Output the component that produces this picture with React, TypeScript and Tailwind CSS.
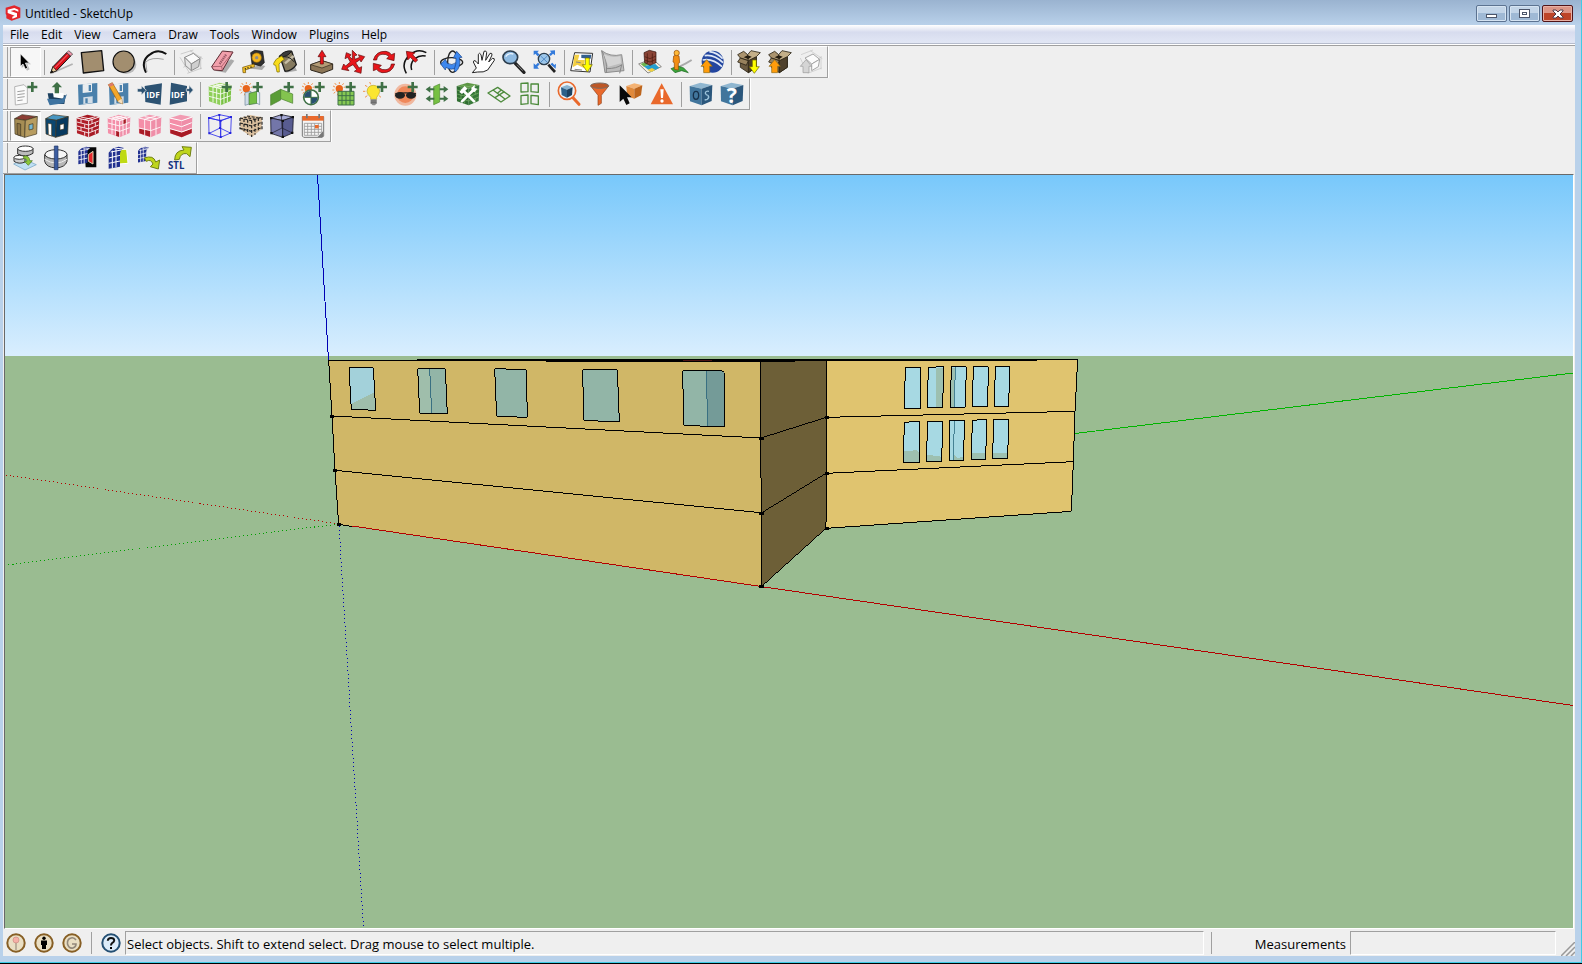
import type { ReactNode } from "react";

type Tool = { label: string; art: ReactNode; active?: boolean };

const Icon = ({ children }: { children: ReactNode }) => (
  <svg viewBox="0 0 72 72" className="size-6 shrink-0 overflow-visible" aria-hidden="true" strokeLinejoin="round">
    {children}
  </svg>
);

const Plus = ({ x = 40, y = 0 }: { x?: number; y?: number }) => (
  <path d={`M${x + 12} ${y}h8v11h11v8h-11v11h-8v-11h-11v-8h11z`} fill="#3f7046" />
);

const Sun = ({ x = 22, y = 20 }: { x?: number; y?: number }) => (
  <g transform={`translate(${x} ${y})`}>
    <path d="M0-20v6M-19-8l6 3M-14-17l5 6M-21 4h6M-17 14l5-4M13-16l-4 5M18-5l-5 1M-6 20l2-6" stroke="#f0934e" strokeWidth="3" />
    <circle r="11" fill="#e8641b" />
  </g>
);

const UpArrow = ({ x, y, fill }: { x: number; y: number; fill: string }) => (
  <path d={`M${x} ${y}l17 20h-8v19h-18v-19h-8z`} fill={fill} stroke="#8a6a1a" strokeWidth="2" />
);

const cubeTop = "3,12 34,2 69,9 38,20";
const cubeLeft = "2,12 38,20 38,70 3,58";
const cubeRight = "38,20 70,9 68,57 38,70";

const Cube = ({ top, left, right, line = "none", outline, children }: { top: string; left: string; right: string; line?: string; outline?: boolean; children?: ReactNode }) => (
  <g strokeWidth="2.5">
    <g stroke={outline ? line : "none"}>
      <polygon points={cubeTop} fill={top} />
      <polygon points={cubeLeft} fill={left} />
      <polygon points={cubeRight} fill={right} />
    </g>
    <g stroke={line}>{children}</g>
  </g>
);

const edgePath = "M2 12L38 20 70 9M38 20V70";
const gridPath = "M3 27L38 36 68 25M3 43L38 52 68 41M15 15V61M26 17V65M48 16V65M58 12V61M14 9L49 16M24 6L59 12M14 15L46 6M26 17L58 8";
const brickPath = "M3 24L38 33 68 21M3 36L38 45 68 33M3 47L38 57 68 45M15 15V27M26 31V42M15 39V50M26 54V65M48 17V29M58 26V37M48 41V53M58 49V60M14 9L49 16M26 17L58 8";

const Globe = () => (
  <g>
    <circle cx="38" cy="35" r="33" fill="#23469f" />
    <path d="M14 17Q42 12 69 38M8 30Q38 24 66 50M28 5Q52 8 68 26" fill="none" stroke="#dfe8f7" strokeWidth="5" />
  </g>
);

const OpenBox = () => (
  <g stroke="#2b2416" strokeWidth="2.5">
    <path d="M10 24L34 32 58 20V52L34 68 10 52z" fill="#6b5a40" />
    <path d="M34 32V68L58 52V20z" fill="#4f412c" />
    <path d="M10 24L2 14 20 4 32 14 34 32z" fill="#ab946f" />
    <path d="M32 14L42 2 70 8 58 20 34 32z" fill="#c4af88" />
    <path d="M10 24L34 32 28 46 2 36z" fill="#97815d" />
    <path d="M20 22L32 16 44 20 34 27z" fill="#241c10" stroke="none" />
  </g>
);

const Magnifier = ({ lens = "#8fbbe2" }: { lens?: string }) => (
  <g>
    <path d="M40 40L66 67" stroke="#222" strokeWidth="10" strokeLinecap="round" />
    <path d="M45 44L62 62" stroke="#888" strokeWidth="3" />
    <ellipse cx="25" cy="22" rx="22" ry="19" fill={lens} stroke="#2c3d4d" strokeWidth="5" />
    <path d="M11 20Q18 8 34 12" stroke="#e7f2fc" strokeWidth="4" fill="none" />
  </g>
);

const Floppy = () => (
  <g>
    <path d="M6 8L64 3V62L8 69z" fill="#4a80ab" />
    <path d="M20 7L48 4V30L20 33z" fill="#e9edf0" />
    <path d="M22 46L50 43V63L22 66z" fill="#d3dde6" />
    <path d="M38 9h7v18h-7z" fill="#4a80ab" />
    <path d="M28 49h7v14h-7z" fill="#4a80ab" />
  </g>
);

const Idf = ({ out = false }: { out?: boolean }) => (
  <g>
    <path d={out ? "M6 2L54 12V58L2 68z" : "M20 12L72 4 68 68 22 60z"} fill="#2c5272" />
    <path d={out ? "M52 20h8v-10l13 14-13 14v-10h-8z" : "M-2 20h12v-9l15 14-15 14v-9H-2z"} fill="#2c5272" stroke="#efefef" strokeWidth="2" />
    <text x={out ? 6 : 25} y="48" fontSize="25" fontWeight="700" fontFamily="Open Sans, sans-serif" fill="#fff">IDF</text>
  </g>
);

const House = ({ wall, side, roof, glass, door }: { wall: string; side: string; roof: string; glass: string; door: string }) => (
  <g stroke="#3d3420" strokeWidth="2">
    <polygon points="2,14 24,2 70,8 34,19" fill={roof} />
    <polygon points="2,14 34,19 32,70 3,60" fill={wall} />
    <polygon points="34,19 70,8 68,60 32,70" fill={side} />
    <path d="M9 28L20 30V66L10 62z" fill={door} />
    <path d="M45 32L57 29V45L45 48z" fill={glass} />
  </g>
);

const Panels = ({ x = 4, s = 1 }: { x?: number; s?: number }) => (
  <g transform={`translate(${x} 2) scale(${s})`}>
    <path d="M0 18Q10 2 30 0L46 4Q34 8 34 26V60L0 66z" fill="#21308f" />
    <path d="M0 34L34 26M0 50L34 43M11 12V64M22 6V62M6 16L38 10M16 4L42 7" stroke="#fff" strokeWidth="3" fill="none" />
  </g>
);

const drawing: Tool[][] = [
  [{ label: "Select", active: true, art: <><path d="M26 17V54L34 47 42 62 50 58 43 43H54z" fill="#bbb" /><path d="M22 11V49L30 42 37 57 44 54 37 39H49z" fill="#000" stroke="#fff" strokeWidth="2" /></> }],
  [
    { label: "Pencil", art: <><path d="M6 69L68 42" stroke="#b2b2b2" strokeWidth="5" /><path d="M2 69L9 50 50 8 62 18 20 62z" fill="#d90f18" stroke="#111" strokeWidth="3" /><path d="M14 54L54 13" stroke="#ff7880" strokeWidth="3" /><path d="M2 69L9 50 20 62z" fill="#e7c99c" stroke="#111" strokeWidth="2" /><path d="M2 69L5 61 10 65z" fill="#000" /><path d="M50 8L56 2 68 12 62 18z" fill="#f095a9" stroke="#333" strokeWidth="2" /></> },
    { label: "Rectangle", art: <path d="M1 8L62 2 68 62 7 69z" fill="#a28e6f" stroke="#111" strokeWidth="4" /> },
    { label: "Circle", art: <><ellipse cx="42" cy="44" rx="31" ry="28" fill="#bbb" /><circle cx="35" cy="35" r="32" fill="#a28e6f" stroke="#111" strokeWidth="3.5" /></> },
    { label: "Arc", art: <><path d="M9 68Q-8 34 20 14Q44-6 70 12" fill="none" stroke="#111" strokeWidth="6" /><path d="M8 36Q26 20 62 28M8 36L12 66" fill="none" stroke="#777" strokeWidth="2" /></> },
  ],
  [
    { label: "Make Component", art: <g fill="#fafafa" stroke="#8d8d8d" strokeWidth="3"><path d="M2 12L40 0M0 22L28 68M30 2L68 26M10 52L64 20M22 70L66 54M62 20V58" stroke="#b9b9b9" strokeWidth="2" fill="none" /><path d="M14 22L40 10 60 26 34 42z" /><path d="M14 22L34 42V62L16 46z" fill="#e6e6e6" /><path d="M34 42L60 26 56 50 34 62z" fill="#cfcfcf" /></g> },
    { label: "Eraser", art: <><path d="M12 62L44 68 70 32 60 28z" fill="#aaa" /><path d="M2 50L34 3 66 6 34 62 8 60z" fill="#f2a0ab" stroke="#5c2c33" strokeWidth="3" /><path d="M2 50L32 49 66 6M32 49L34 62" fill="none" stroke="#8d4955" strokeWidth="2" /><path d="M26 42L45 14" stroke="#9a5966" strokeWidth="7" strokeDasharray="4 2" /></> },
    { label: "Tape Measure", art: <><path d="M24 56L60 60 70 48 54 44z" fill="#aaa" /><path d="M26 8L38 1 62 4 67 38 56 48 30 42z" fill="#303030" stroke="#111" strokeWidth="2" /><circle cx="44" cy="23" r="14" fill="#f4b51e" stroke="#a77609" strokeWidth="2" /><circle cx="44" cy="23" r="5" fill="#8d8d8d" /><path d="M2 52L36 42 38 50 10 60 11 68H3z" fill="#f6c42b" stroke="#6b4b00" strokeWidth="2" /><path d="M10 54v5M18 51v5M27 49v5" stroke="#222" strokeWidth="3" /></> },
    { label: "Paint Bucket", art: <><path d="M36 68L72 62 64 46z" fill="#aaa" /><path d="M20 18L56 4 70 44 Q56 64 36 64z" fill="#857a60" stroke="#1c1c1c" strokeWidth="4" /><path d="M36 40L62 18" stroke="#c6bda6" strokeWidth="7" /><path d="M18 20Q34 0 56 3 42 24 18 20" fill="#3b3b3b" stroke="#1c1c1c" strokeWidth="3" /><path d="M22 24Q44 12 64 36" fill="none" stroke="#222" strokeWidth="3" /><path d="M26 18Q6 26 2 40Q0 46 8 46L12 66 19 66 18 42Q24 34 34 28z" fill="#f8dc1b" stroke="#7a6a00" strokeWidth="2" /></> },
  ],
  [
    { label: "Push/Pull", art: <><path d="M2 44L36 32 68 42V58L36 70 2 60z" fill="#8c7657" stroke="#2c241a" strokeWidth="3" /><path d="M2 44L36 32 68 42 36 54z" fill="#b49c76" stroke="#2c241a" strokeWidth="2" /><path d="M36 1L48 20H40V42H31V20H24z" fill="#e8161b" stroke="#5c0808" strokeWidth="2" /></> },
    { label: "Move", art: <path d="M34 1L48 15 40 18 42 28 56 22 52 14 71 20 60 36 57 29 44 38 54 54 62 50 60 70 40 64 47 59 36 44 18 54 24 62 2 58 8 42 14 48 28 36 20 22 12 26 16 8 30 14 26 20 34 28z" fill="#e8161b" stroke="#5c0808" strokeWidth="2" /> },
    { label: "Rotate", art: <g fill="#e8161b" stroke="#5c0808" strokeWidth="2"><path d="M4 30Q12 2 42 4 54 6 58 14L68 10 66 32 44 26 51 19Q42 11 30 13 16 15 14 30z" /><path d="M68 42Q60 70 30 68 18 66 14 58L4 62 4 40 28 46 21 53Q30 61 42 59 56 57 58 42z" /></g> },
    { label: "Offset", art: <><path d="M10 70Q-8 38 22 14Q44-6 70 8M26 60Q20 40 36 26Q50 14 68 18" fill="none" stroke="#111" strokeWidth="4.5" /><path d="M10 4L36 8 29 14 44 30 37 37 22 22 14 30z" fill="#e8161b" stroke="#5c0808" strokeWidth="2" /></> },
  ],
  [
    { label: "Orbit", art: <><ellipse cx="35" cy="37" rx="33" ry="14" fill="none" stroke="#222" strokeWidth="4" /><ellipse cx="38" cy="35" rx="15" ry="32" fill="none" stroke="#222" strokeWidth="4" /><path d="M2 42L16 28 22 40Q36 48 48 38L54 50Q34 64 18 52L16 60z" fill="#3d87ee" stroke="#153f83" strokeWidth="2" /><path d="M50 4L66 22 58 23Q64 52 46 66L42 60Q50 42 48 24L40 24z" fill="#3d87ee" stroke="#153f83" strokeWidth="2" /></> },
    { label: "Pan", art: <path d="M4 68L16 54 7 36Q8 28 15 34L22 42 22 13Q25 6 30 14L33 31 39 4Q45 0 47 8L44 31 57 10Q64 8 63 15L53 36 64 25Q72 24 70 31L50 60Q38 68 20 66z" fill="#fff" stroke="#222" strokeWidth="3" /> },
    { label: "Zoom", art: <Magnifier /> },
    { label: "Zoom Extents", art: <><path d="M46 44L66 66" stroke="#222" strokeWidth="8" /><circle cx="33" cy="27" r="17" fill="#9dc7ea" stroke="#2c3d4d" strokeWidth="4" /><path d="M23 18L43 37M43 18L23 37" stroke="#3270b5" strokeWidth="2" /><path d="M2 2h16l-5 5 7 7-6 5-7-8-5 5zM66 1v15l-6-5-7 7-5-5 7-6-5-5zM2 56V40l6 5 7-7 5 5-7 7 5 6zM52 43l6-5 6 7 5-4-1 15z" fill="#347bdb" /></> },
  ],
  [
    { label: "Add Location", art: <><path d="M2 62L14 8 68 10 60 66z" fill="#fff" stroke="#333" strokeWidth="3" /><path d="M8 52L14 14 28 14 24 30 44 30 42 54 22 44z" fill="#f3cf42" /><path d="M34 14L64 14 62 26 34 24z" fill="#34608e" /><path d="M18 36L32 38M14 58L36 60" stroke="#888" strokeWidth="3" /><path d="M46 24H58V44H67L52 66 37 44H46z" fill="#ff0" stroke="#6d6500" strokeWidth="2" /></> },
    { label: "Toggle Terrain", art: <><path d="M2 2Q28 22 62 14L69 62 12 68z" fill="#bcbcbc" stroke="#8e8e8e" strokeWidth="3" /><path d="M2 2Q20 30 16 68M16 56Q48 56 62 44L56 70" fill="none" stroke="#888" strokeWidth="3" /><path d="M8 12Q30 26 58 18L60 40 22 50z" fill="#d4d4d4" /></> },
  ],
  [
    { label: "Photo Textures", art: <><path d="M2 42L42 26 70 50 30 69z" fill="#f5eee0" stroke="#555" strokeWidth="2" /><path d="M16 48L40 66 64 53 52 42z" fill="#259ed0" /><path d="M8 42L18 50 32 43 22 36z" fill="#6bb34f" /><path d="M28 60L40 66 52 60 42 54z" fill="#f3cf42" /><path d="M18 8L34 1 54 6V38L36 46 20 38z" fill="#8a4436" stroke="#2e120d" strokeWidth="2" /><path d="M28 10V40M43 10V40M20 20L36 26 54 18M20 30L36 36 54 28" stroke="#48190f" strokeWidth="2" fill="none" /></> },
    { label: "Street View", art: <><path d="M24 54Q48 42 68 30M48 42L68 30" stroke="#aaa" strokeWidth="6" fill="none" /><path d="M6 56L26 48 44 54 58 68 38 62 18 68z" fill="#3ba53d" stroke="#176219" strokeWidth="2" /><path d="M14 18Q22 12 30 18L32 38 28 40V60L16 58V38L12 36z" fill="#f28d12" stroke="#8c4708" strokeWidth="2" /><circle cx="23" cy="9" r="8" fill="#ffb938" stroke="#8c4708" strokeWidth="2" /></> },
    { label: "Preview in Google Earth", art: <><Globe /><UpArrow x={20} y={29} fill="#ff9c0b" /></> },
  ],
  [
    { label: "Get Models", art: <><OpenBox /><path d="M46 30H58V50H67L52 70 37 50H46z" fill="#ff0" stroke="#6d6500" strokeWidth="2" /></> },
    { label: "Share Model", art: <><OpenBox /><UpArrow x={20} y={29} fill="#ff9c0b" /></> },
    { label: "Share Component", art: <><g fill="#fbfbfb" stroke="#a5a5a5" strokeWidth="3"><path d="M6 14L42 0M4 24L24 68M34 2L70 26M14 52L68 20M26 70L68 54M66 20V58" stroke="#c4c4c4" strokeWidth="2" fill="none" /><path d="M18 24L42 12 62 28 38 42z" /><path d="M38 42L62 28 58 50 38 62z" /></g><path d="M21 29l17 20h-8v19h-18v-19h-8z" fill="#d5d5d5" stroke="#999" strokeWidth="2" /></> },
  ],
];

const openStudio: Tool[][] = [
  [
    { label: "New OpenStudio Model", art: <><path d="M2 14L30 8 40 18V64L4 69z" fill="#fafafa" stroke="#b5b5b5" strokeWidth="3" /><path d="M10 29L32 26M10 38L32 35M10 47L32 44M10 56L26 54" stroke="#8d8d8d" strokeWidth="2.5" /><Plus x={39} /></> },
    { label: "Open OpenStudio Model", art: <><path d="M8 34H24L30 40H62L58 66H14z" fill="#1b3f5e" /><path d="M24 30L56 34V50L26 46z" fill="#fff" /><path d="M6 50L50 52 66 36 56 64 14 70z" fill="#3e73a0" /><path d="M36 0L51 16H42V34H29V16H20z" fill="#3f7046" /></> },
    { label: "Save OpenStudio Model", art: <Floppy /> },
    { label: "Save OpenStudio Model As", art: <><Floppy /><path d="M4 8L16 2 44 50 46 66 32 58z" fill="#f2a72a" stroke="#996116" strokeWidth="2" /><path d="M32 58L44 50 46 66z" fill="#f6dfbd" /><path d="M4 8L16 2 20 9 8 15z" fill="#e07a68" /></> },
    { label: "Import IDF", art: <Idf /> },
    { label: "Export IDF", art: <Idf out /> },
  ],
  [
    { label: "New Space", art: <><Cube top="#a6d96f" left="#8fcf5a" right="#79c143" line="#fff"><path d={gridPath} fill="none" /><path d={edgePath} fill="none" /></Cube><Plus /></> },
    { label: "New Shading Surface Group", art: <><Sun /><path d="M18 32L36 28V64L18 70z" fill="#cfdce8" stroke="#6d8799" strokeWidth="2" /><path d="M30 34L54 28V64L30 68z" fill="#75bf45" stroke="#3f7046" strokeWidth="2" /><path d="M54 28L62 32V68L54 64" fill="#e0e8ef" stroke="#6d8799" strokeWidth="2" /><Plus /></> },
    { label: "New Interior Partition", art: <><path d="M2 38L32 22V54L2 70z" fill="#5a9d37" stroke="#477d2c" strokeWidth="2" /><path d="M32 22L68 36V64L32 50z" fill="#83c44f" stroke="#477d2c" strokeWidth="2" /><Plus /></> },
    { label: "New Daylighting Control", art: <><Sun /><circle cx="30" cy="46" r="22" fill="#fff" stroke="#3f7046" strokeWidth="5" /><path d="M30 26V46H10A20 20 0 0 1 30 26M30 66V46H50A20 20 0 0 1 30 66" fill="#274f70" /><path d="M30 26V66M10 46H50" stroke="#3f7046" strokeWidth="3" /><Plus /></> },
    { label: "New Illuminance Map", art: <><Sun /><path d="M18 28H66V69H18z" fill="#86c953" stroke="#3f7046" strokeWidth="3" /><path d="M30 28V69M42 28V69M54 28V69M18 41H66M18 55H66" stroke="#3f7046" strokeWidth="3" /><Plus /></> },
    { label: "New Luminaire", art: <><path d="M6 10l7 4M0 28h7M6 46l7-5M54 46l-6-5M20 0l3 7" stroke="#f0934e" strokeWidth="3" /><path d="M12 28Q14 10 31 10 49 11 50 28 49 38 41 46V52H23V46Q13 38 12 28" fill="#fbe631" stroke="#bda61f" strokeWidth="2" /><path d="M23 52H41V64L36 70H29L23 64z" fill="#8c8c8c" /><path d="M23 57H41M23 62H41" stroke="#555" strokeWidth="2" /><Plus x={41} /></> },
    { label: "New Glare Sensor", art: <><circle cx="34" cy="38" r="33" fill="#f18b5c" opacity=".55" /><circle cx="34" cy="38" r="25" fill="#ee6e36" opacity=".65" /><ellipse cx="18" cy="40" rx="15" ry="10" fill="#222" /><ellipse cx="51" cy="40" rx="15" ry="10" fill="#222" /><path d="M4 35Q36 30 66 35" stroke="#222" strokeWidth="4" fill="none" /><Plus /></> },
    { label: "Surface Matching", art: <><path d="M26 14L44 6V60L26 68z" fill="#76c043" stroke="#4d8b2e" strokeWidth="2" /><path d="M16 12L2 22 16 32V25H28V19H16zM16 40L2 50 16 60V53H28V47H16zM56 12L70 22 56 32V25H44V19H56zM56 40L70 50 56 60V53H44V47H56z" fill="#3f7046" /></> },
    { label: "Surface Operations", art: <><Cube top="#5d9644" left="#2f6d31" right="#38793a" line="#7fb56c"><path d={brickPath} fill="none" strokeWidth="2" /></Cube><path d="M20 24L54 58M52 24L18 58" stroke="#fff" strokeWidth="8" strokeLinecap="round" /><path d="M10 30L26 12 34 20 18 36zM46 18L56 8V18L64 20 56 30 48 28z" fill="#fff" /></> },
    { label: "Set Boundary Surface", art: <g fill="none" stroke="#4c8a3b" strokeWidth="4"><path d="M3 33L32 16 69 42 42 60z" /><path d="M18 24L54 51M24 47L52 29M32 33L43 24" /></g> },
    { label: "Project Loose Geometry", art: <path d="M9 4L30 3V29L9 30zM39 6H61V31L39 29zM9 41L30 39V65L9 67zM39 40L61 42V68L39 65z" fill="none" stroke="#4c8a3b" strokeWidth="4" /> },
  ],
  [
    { label: "Inspector", art: <><path d="M46 45L66 67" stroke="#e9692c" strokeWidth="9" strokeLinecap="round" /><circle cx="30" cy="26" r="26" fill="#eef2f5" stroke="#e9692c" strokeWidth="5" /><path d="M12 16L30 9 47 16 30 23z" fill="#8bb3cf" /><path d="M12 16L30 23V47L14 39z" fill="#2c6089" /><path d="M30 23L47 16 45 39 30 47z" fill="#1b4161" /></> },
    { label: "Search", art: <><path d="M8 12L30 40V70L40 64V40L62 12z" fill="#e9692c" stroke="#8e3d12" strokeWidth="2" /><ellipse cx="35" cy="11" rx="27" ry="8" fill="#bd5726" stroke="#7d6b61" strokeWidth="3" /></> },
    { label: "Select Surfaces", art: <><path d="M22 12L46 4 70 10 46 20z" fill="#f4b273" /><path d="M22 12L46 20V50L24 42z" fill="#e0893b" /><path d="M46 20L70 10 66 40 46 50z" fill="#bd651d" /><path d="M2 10V60L13 50 22 69 32 64 24 46H38z" fill="#0a0a0a" /></> },
    { label: "Show Errors", art: <><path d="M35 4L69 67H2z" fill="#e9692c" /><path d="M31 22H41L39 48H33z" fill="#fff" /><circle cx="36" cy="57" r="5" fill="#fff" /></> },
  ],
  [
    { label: "Launch OpenStudio", art: <><Cube top="#8fb6d0" left="#41759c" right="#2b577c" /><ellipse cx="21" cy="40" rx="8" ry="12" fill="none" stroke="#17304a" strokeWidth="4" /><path d="M60 28Q49 26 49 34 51 40 57 40 62 46 55 52L47 54" fill="none" stroke="#9cc3da" strokeWidth="4" /></> },
    { label: "OpenStudio Help", art: <><Cube top="#8fb6d0" left="#41759c" right="#2b577c" /><text x="20" y="62" fontSize="64" fontWeight="700" fontFamily="Open Sans, sans-serif" fill="#fff">?</text></> },
  ],
];

const rendering: Tool[][] = [
  [
    { label: "View Model in X-Ray Mode", active: true, art: <House wall="#a68d54" side="#b79c60" roof="#8c3e35" glass="#78b7cf" door="#8c7445" /> },
    { label: "Render by Surface Type", art: <House wall="#0b4670" side="#07395f" roof="#4896c1" glass="#fff" door="#fff" /> },
    { label: "Render by Boundary Condition", art: <Cube top="#a81b25" left="#b01f29" right="#a81b25" line="#fff"><path d={brickPath} fill="none" /><path d={edgePath} fill="none" /></Cube> },
    { label: "Render by Surface Normal", art: <Cube top="#f29bb2" left="#f48ea8" right="#ef8ea8" line="#fff"><path d="M48 17L58 13V29L48 32zM26 50L38 53V69L26 65z" fill="#a81b25" stroke="none" /><path d={gridPath} fill="none" /><path d={edgePath} fill="none" /></Cube> },
    { label: "Render by Space Type", art: <Cube top="#f29bb2" left="#f48ea8" right="#ef8ea8" line="#fff"><path d="M4 44L38 50V69L4 58z" fill="#a81b25" stroke="none" /><path d="M20 16V63M54 15V63M3 42L38 50 68 39M20 8L54 14M20 16L54 6" fill="none" /><path d={edgePath} fill="none" /></Cube> },
    { label: "Render by Building Story", art: <Cube top="#f29bb2" left="#f48ea8" right="#ef8ea8" line="#fff"><path d="M4 45L38 55 68 44V57L38 70 4 58z" fill="#a81b25" stroke="none" /><path d="M3 28L38 38 68 26M3 44L38 54 68 43M2 12L38 20 70 9" fill="none" strokeWidth="3" /></Cube> },
  ],
  [
    { label: "View Wireframe", art: <><Cube top="none" left="none" right="none" line="#2c2cec" outline><path d="M34 3L36 42 4 58M36 42L67 57" fill="none" strokeWidth="2.5" /></Cube><path d="M0 9h6v6H0zM31 0h6v6h-6zM66 6h6v6h-6zM35 17h6v6h-6zM1 55h6v6H1zM35 66h6v6h-6zM64 54h6v6h-6zM33 39h6v6h-6z" fill="#2323dc" /></> },
    { label: "Hide Rest of Model", art: <><path d="M3 12L34 3 69 9 68 46 38 69 4 46z" fill="#dabf9e" /><path d="M3 27L38 36 68 25M3 43L38 52 68 41M15 15V54M26 17V62M48 16V62M58 12V54M14 9L49 16M24 6L59 12M3 12V46M38 20V69M69 9V46M3 12L38 20 69 9" fill="none" stroke="#222" strokeWidth="3.5" strokeDasharray="9 5" /></> },
    { label: "X-Ray", art: <><Cube top="#a5a9d4" left="#7376a9" right="#585c91" line="#1a1a28" outline><path d="M34 3L36 42 4 58M36 42L67 57" fill="none" strokeWidth="2" /></Cube><path d="M0 9h7v7H0zM31 0h7v7h-7zM65 6h7v7h-7zM35 17h7v7h-7zM1 54h7v7H1zM35 65h7v7h-7zM63 53h7v7h-7z" fill="#111" /></> },
    { label: "Schedules", art: <><path d="M4 8H68V66L64 70H8L4 66z" fill="#f5f5f5" stroke="#777" strokeWidth="3" /><path d="M4 6H68V20H4z" fill="#ea6a2d" /><path d="M15 0h5v13h-5zM52 0h5v13h-5z" fill="#777" /><path d="M10 28H62M10 37H62M10 46H62M10 55H62M10 64H50M10 28V64M20 28V64M31 28V64M41 28V64M52 28V64M62 28V55" stroke="#999" strokeWidth="2.5" /><path d="M42 33h11v10H42z" fill="#ea6a2d" /><path d="M50 69L66 52V69z" fill="#777" /></> },
  ],
];

const exporting: Tool[][] = [
  [
    { label: "Import Geometry", art: <><path d="M2 54L30 38 70 56 36 72z" fill="#bfdff3" stroke="#6e9fc0" strokeWidth="2" /><path d="M14 8V24Q38 36 60 22V7z" fill="#bbb" stroke="#333" strokeWidth="3" /><ellipse cx="37" cy="8" rx="23" ry="8" fill="#fff" stroke="#333" strokeWidth="3" /><path d="M3 34V46Q18 56 36 48V34z" fill="#ccc" stroke="#333" strokeWidth="3" /><ellipse cx="19" cy="34" rx="16" ry="6" fill="#fff" stroke="#333" strokeWidth="3" /><path d="M32 30Q50 28 50 44H58L46 58 34 46H42Q42 36 32 38z" fill="#8bc739" stroke="#47731b" strokeWidth="2" /></> },
    { label: "Slice Model", art: <><path d="M2 26V46Q6 64 36 66 64 64 69 46V26z" fill="#b7b7b7" stroke="#333" strokeWidth="3" /><ellipse cx="36" cy="25" rx="33" ry="14" fill="#f6f6f6" stroke="#333" strokeWidth="3" /><path d="M2 40Q36 62 69 40" fill="none" stroke="#eee" strokeWidth="3" /><path d="M31 0h11v71H31z" fill="#3c5da0" stroke="#1e3465" strokeWidth="2" /></> },
    { label: "Hide Face", art: <><path d="M28 10L42 4H64V64H32z" fill="#060606" /><path d="M40 26L54 16V54L40 46z" fill="#e5262b" stroke="#ddd0b0" strokeWidth="3" /><Panels x={10} s={0.8} /></> },
    { label: "Show Face", art: <><path d="M36 14Q46 8 62 10L66 52 38 54z" fill="#bfda14" stroke="#fff" strokeWidth="3" /><Panels x={8} /></> },
    { label: "Apply Solar Panel", art: <><Panels x={3} s={0.72} /><path d="M22 36Q50 26 56 48L68 42 64 69 40 62 48 54Q42 38 28 46z" fill="#bfd51b" stroke="#718114" strokeWidth="3" /></> },
    { label: "Export STL", art: <><path d="M20 42Q20 14 48 12L42 2 70 4 66 32 56 23Q38 20 34 40z" fill="#bfd51b" stroke="#718114" strokeWidth="3" /><text x="0" y="70" fontSize="29" fontWeight="700" fontFamily="Open Sans, sans-serif" fill="#15327f">STL</text></> },
  ],
];

function Toolbar({ label, groups, wide }: { label: string; groups: Tool[][]; wide?: boolean }) {
  return (
    <div
      role="toolbar"
      aria-label={label}
      className={`flex h-8 w-fit border-t border-r border-b border-t-white border-r-[#a0a0a0] border-b-[#a0a0a0] pl-1 shadow-[1px_0_0_#fff] ${wide ? "pr-[2px]" : ""}`}
    >
      <span className="mr-[2px] w-px border-r border-[#a0a0a0]" />
      {groups.map((group, index) => (
        <div key={group[0].label} className="flex">
          {index > 0 && (
            <span className={wide ? "flex w-2 items-center justify-center" : "flex w-[6px] items-center justify-center"}>
              <span className="h-[25px] w-px bg-[#a0a0a0]" />
            </span>
          )}
          {group.map((tool) => (
            <button
              key={tool.label}
              type="button"
              aria-label={tool.label}
              aria-pressed={tool.active}
              className={`flex w-[31px] items-center justify-center ${wide ? "" : "pr-[2px]"} ${
                tool.active ? "border border-t-[#a0a0a0] border-r-white border-b-white border-l-[#a0a0a0] bg-[#f7f7f7]" : ""
              }`}
            >
              <Icon>{tool.art}</Icon>
            </button>
          ))}
        </div>
      ))}
    </div>
  );
}

const menus = ["File", "Edit", "View", "Camera", "Draw", "Tools", "Window", "Plugins", "Help"];

function Scene() {
  return (
    <svg role="img" aria-label="Building model" viewBox="5 175 1568 753" preserveAspectRatio="xMidYMid slice" className="block size-full" shapeRendering="crispEdges">
      <defs>
        <linearGradient id="sky" x1="0" y1="0" x2="0" y2="1">
          <stop offset="0" stopColor="#78c8fb" />
          <stop offset="1" stopColor="#d9eefe" />
        </linearGradient>
      </defs>
      <rect x="5" y="175" width="1568" height="181" fill="url(#sky)" />
      <rect x="5" y="356" width="1568" height="572" fill="#9abc91" />
      <g fill="none" strokeDasharray="1 3">
        <path d="M339 524L6 475" stroke="#b40000" />
        <path d="M339 524L6 565" stroke="#00a000" />
        <path d="M339 526L363.5 928" stroke="#0000b4" />
      </g>
      <path d="M317.5 175L328.5 360" stroke="#0000b4" />
      <path d="M1075 433.5L1573 373" stroke="#00b400" />

      <g transform="translate(310 340) scale(.33333)" stroke="#000" strokeWidth="3" fill="none">
        <path d="M56 61L1352 61 1354 740 86 553 75 391 66 228z" fill="#d0b767" stroke="none" />
        <path d="M1352 61L1354 740M130 560L86 553 75 391 66 228 56 61H330" />
        <path d="M66 228L1352 294M75 391L1352 518" />
        <g stroke="none">
          <path d="M117 83H190L197 211 124 208z" fill="#a3d1da" />
          <path d="M123 192L195 156 197 211 125 208z" fill="#9fbeab" />
          <path d="M323 86H406L412 222 329 219z" fill="#92b5a7" />
          <path d="M323 86H359L364 220 329 219z" fill="#9fbeab" />
          <path d="M554 86L649 89 652 232 560 229z" fill="#92b5a7" />
          <path d="M818 89H922L928 246 821 241z" fill="#92b5a7" />
          <path d="M1118 92H1236L1243 98V261L1121 256z" fill="#92b5a7" />
          <path d="M1190 92H1236L1243 98V261L1192 258z" fill="#749b98" />
        </g>
        <path d="M359 87L365 218M1189 93L1193 257" stroke="#397082" />
        <path d="M117 83H190L197 211 124 208zM323 86H406L412 222 329 219zM554 86L649 89 652 232 560 229zM818 89H922L928 246 821 241zM1118 92H1236L1243 98V261L1121 256z" />
      </g>

      <g transform="translate(750 340) scale(.33333)" stroke="#000" strokeWidth="3" fill="none">
        <path d="M32 61L229 62 228 565 34 740z" fill="#6d5f37" />
        <path d="M33 294L229 232M34 519L228 400" />
        <path d="M229 62L983 59 975 214 970 365 964 514 228 565z" fill="#e0c46f" />
        <path d="M229 232L975 214M228 400L970 365" />
        <g fill="#a7d9e3" stroke="none">
          <path d="M466 82H512V206H463zM535 82L581 80 578 202H532zM604 80H649L646 202H601zM670 80H715L713 199H667zM736 80H779L776 199H733z" />
          <path d="M463 247L509 244V367H460zM533 244H578L575 364H529zM599 241H643L641 361H598zM667 241L710 238 707 358H664zM732 238H776L773 355H727z" />
        </g>
        <g fill="#9dc0b0" stroke="none">
          <path d="M558 83H579L577 200H558zM604 83H615L613 200H603z" />
          <path d="M462 333L500 331 507 336V365H462zM531 344L574 350V362H531zM612 342L622 354 640 350V360H612zM666 339H707V356H666zM729 339H773V354H729z" />
        </g>
        <path d="M616 81L613 202M613 242L610 361" stroke="#468294" />
        <path d="M466 82H512V206H463zM535 82L581 80 578 202H532zM604 80H649L646 202H601zM670 80H715L713 199H667zM736 80H779L776 199H733zM463 247L509 244V367H460zM533 244H578L575 364H529zM599 241H643L641 361H598zM667 241L710 238 707 358H664zM732 238H776L773 355H727z" />
      </g>

      <path d="M417 359H546V361H417zM546 359H795V362H546zM795 359H1037V361H795z" fill="#000" />
      <path d="M683 360H712" stroke="#4c1414" />
      <path d="M352 526L761 586.5 1573 705.5" fill="none" stroke="#b40000" />
      <path d="M330 415h4v3h-4zM333 469h4v3h-4zM337 523h4v3h-4zM759 437h5v3h-5zM759 512h5v3h-5zM759 585h5v3h-5zM825 416h4v3h-4zM825 472h4v3h-4zM825 527h4v3h-4z" fill="#000" />
    </svg>
  );
}

const statusIcon = "flex size-5 items-center justify-center";

export default function App() {
  return (
    <div className="flex h-screen w-full flex-col overflow-hidden border-b border-black bg-[#b9d1ea] font-['Open_Sans','Noto_Sans',sans-serif] text-xs text-black">
      <div className="flex min-h-0 flex-1 flex-col border-r border-b border-[#3fcbe6]">
        <header className="flex h-[25px] shrink-0 items-center bg-linear-to-b from-[#9ab3d0] to-[#b9d1ea] pr-2 pl-[5px]">
          <svg viewBox="0 0 48 48" className="mr-1 size-4" aria-hidden="true">
            <path d="M2 8L28 1 46 8V38L20 47 4 40V30L2 27z" fill="#e3262b" />
            <path d="M8 14L28 9 40 14V20L28 15 17 18 36 25V36L22 41V35L29 32 8 24z" fill="#fff" />
          </svg>
          <h1 className="flex-1 pt-[2px] text-xs">Untitled - SketchUp</h1>
          <div className="flex gap-[2px] pt-[2px]">
            <button type="button" aria-label="Minimize" className="flex h-[17px] w-[31px] items-center justify-center rounded-[2px] border border-[#5c7391] bg-linear-to-b from-[#c3d5e8] from-50% to-[#9fb9d5] to-50% pt-1 shadow-[inset_0_0_0_1px_#d6e4f2]">
              <span className="h-1 w-[11px] border border-[#4c5569] bg-white" />
            </button>
            <button type="button" aria-label="Maximize" className="flex h-[17px] w-[31px] items-center justify-center rounded-[2px] border border-[#5c7391] bg-linear-to-b from-[#c3d5e8] from-50% to-[#9fb9d5] to-50% shadow-[inset_0_0_0_1px_#d6e4f2]">
              <span className="flex h-[9px] w-[11px] items-center justify-center border border-[#4c5569] bg-white">
                <span className="h-[3px] w-[5px] border border-[#4c5569]" />
              </span>
            </button>
            <button type="button" aria-label="Close" className="flex h-[17px] w-[31px] items-center justify-center rounded-[2px] border border-[#501418] bg-linear-to-b from-[#dc9586] from-50% to-[#bd4428] to-50% shadow-[inset_0_0_0_1px_#e9b1a5]">
              <svg viewBox="0 0 12 10" className="h-[10px] w-3" aria-hidden="true">
                <path d="M1 1H4L6 3 8 1H11V2L8 5 11 8V9H8L6 7 4 9H1V8L4 5 1 2z" fill="#fff" stroke="#533a46" />
              </svg>
            </button>
          </div>
        </header>

        <div className="mr-[6px] mb-[6px] ml-[3px] flex min-h-0 flex-1 flex-col bg-[#efefef]">
          <nav aria-label="Main menu" className="flex h-[19px] shrink-0 items-center border-b border-[#b6bccc] bg-linear-to-b from-white via-[#d7dcee] via-40% to-[#e2e7f5] pt-[2px] pl-px">
            {menus.map((menu) => (
              <button key={menu} type="button" className="px-[6px] text-xs leading-4">
                {menu}
              </button>
            ))}
          </nav>
          <div className="shrink-0 border-t border-white">
            <div className="border-t border-[#a0a0a0]">
              <Toolbar label="Getting started" groups={drawing} />
              <Toolbar label="OpenStudio" groups={openStudio} wide />
              <Toolbar label="Rendering" groups={rendering} wide />
              <Toolbar label="Export" groups={exporting} />
            </div>
          </div>

          <main className="mx-px min-h-0 flex-1 border border-t-[#696969] border-r-white border-b-white border-l-[#696969]">
            <Scene />
          </main>

          <footer className="flex h-[27px] shrink-0 items-center pl-[3px]">
            <div className="flex gap-2">
              <button type="button" aria-label="Geo-location" className={statusIcon}>
                <svg viewBox="0 0 20 20" className="size-5" aria-hidden="true">
                  <circle cx="10" cy="10" r="8.7" fill="#eadfc4" stroke="#875f25" strokeWidth="2" />
                  <path d="M10 9V17" stroke="#8d7f70" />
                  <circle cx="10" cy="7" r="3" fill="#f6b0a7" stroke="#cf8d84" strokeWidth=".7" />
                </svg>
              </button>
              <button type="button" aria-label="Credits" className={statusIcon}>
                <svg viewBox="0 0 20 20" className="size-5" aria-hidden="true">
                  <circle cx="10" cy="10" r="8.7" fill="#eadfc4" stroke="#875f25" strokeWidth="2" />
                  <circle cx="10" cy="5.3" r="1.7" />
                  <path d="M7 7.5H13V12H12V16H8V12H7z" />
                </svg>
              </button>
              <button type="button" aria-label="Sign in" className={statusIcon}>
                <svg viewBox="0 0 20 20" className="size-5" aria-hidden="true">
                  <circle cx="10" cy="10" r="8.7" fill="#eadfc4" stroke="#875f25" strokeWidth="2" />
                  <path d="M14 7Q12 4 9 5 5 6 5.5 11 7 16 11 15 14 14 14 11H10" fill="none" stroke="#92887b" strokeWidth="1.6" />
                </svg>
              </button>
            </div>
            <span className="mx-[9px] h-[22px] w-px bg-[#a0a0a0]" />
            <button type="button" aria-label="Help" className={statusIcon}>
              <svg viewBox="0 0 20 20" className="size-5" aria-hidden="true">
                <circle cx="10" cy="10" r="8.7" fill="#dcecf9" stroke="#244f73" strokeWidth="2" />
                <path d="M6.8 7.7Q7 5 10 5 13.3 5 13.2 7.6 13 9 11 10.2 10 11 10 12.5" fill="none" stroke="#111" strokeWidth="2" />
                <path d="M9 14h2v2H9z" />
              </svg>
            </button>
            <output className="ml-1 h-6 min-w-0 flex-1 truncate border border-t-[#a0a0a0] border-r-white border-b-white border-l-[#a0a0a0] pl-px text-[13px] leading-6">
              Select objects. Shift to extend select. Drag mouse to select multiple.
            </output>
            <span className="mx-[7px] h-[22px] w-px bg-[#a0a0a0]" />
            <label htmlFor="measurements" className="ml-9 pt-[2px] text-[13px] leading-6">
              Measurements
            </label>
            <input id="measurements" type="text" className="ml-1 h-6 w-[206px] border border-t-[#a0a0a0] border-r-white border-b-white border-l-[#a0a0a0] bg-transparent px-1" />
            <svg viewBox="0 0 14 14" className="ml-[5px] size-[14px] self-end" aria-hidden="true">
              <path d="M0 14L14 0M5 14L14 5M10 14L14 10" stroke="#999" strokeWidth="1.5" />
            </svg>
          </footer>
        </div>
      </div>
    </div>
  );
}
